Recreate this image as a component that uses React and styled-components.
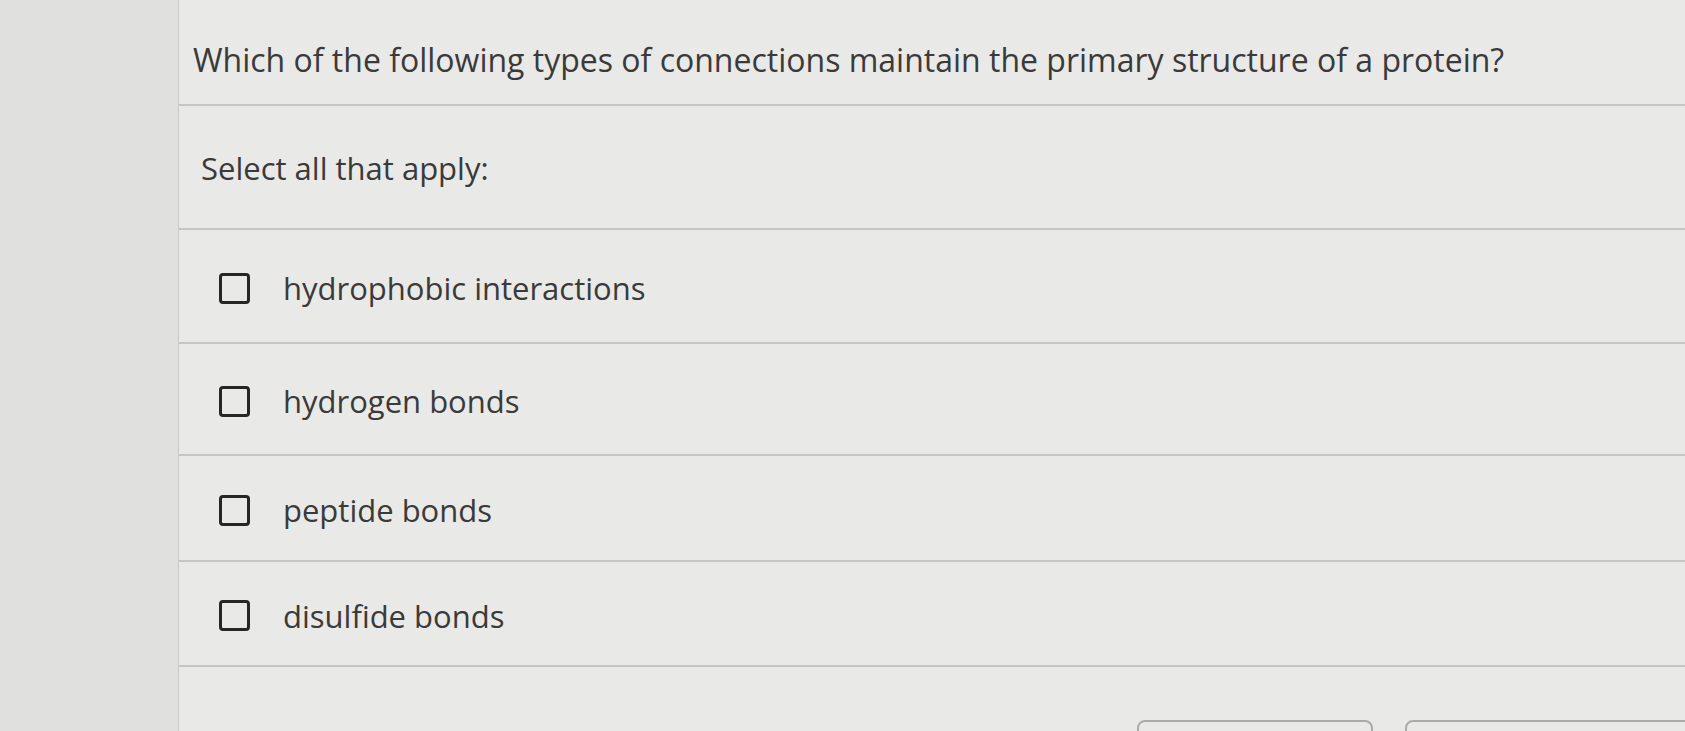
import React, { useState } from 'react'
import styled, { createGlobalStyle } from 'styled-components'

const GlobalStyle = createGlobalStyle`
  html, body {
    margin: 0;
    padding: 0;
    height: 731px;
    overflow: hidden;
    background: #e0e0de;
    font-family: 'Open Sans', 'Noto Sans', sans-serif;
    color: #3a3a3a;
  }
`

const Page = styled.div`
  display: flex;
  height: 731px;
`

const Sidebar = styled.aside`
  width: 178px;
  flex-shrink: 0;
  background: #e0e0de;
  border-right: 1px solid #cacac8;
`

const Panel = styled.main`
  flex: 1;
  background: #e9e9e7;
  overflow: hidden;
`

const Question = styled.h1`
  margin: 0;
  height: 106px;
  box-sizing: border-box;
  padding: 40px 0 0 14px;
  font-size: 32px;
  font-weight: 400;
  line-height: 40px;
  white-space: nowrap;
  border-bottom: 2px solid #c5c5c3;
`

const Prompt = styled.div`
  height: 124px;
  box-sizing: border-box;
  padding: 42px 0 0 22px;
  font-size: 31px;
  line-height: 40px;
  border-bottom: 2px solid #c5c5c3;
`

const Option = styled.label`
  display: flex;
  align-items: center;
  gap: 33px;
  height: ${p => p.$h}px;
  box-sizing: border-box;
  padding: 4px 0 0 40px;
  font-size: 31px;
  border-bottom: 2px solid #c5c5c3;
  cursor: pointer;
`

const Box = styled.span`
  width: 31px;
  height: 31px;
  box-sizing: border-box;
  border: 3px solid #262626;
  border-radius: 4px;
  flex-shrink: 0;
  background: ${p => (p.$on ? '#262626' : 'transparent')};
`

const Footer = styled.div`
  display: flex;
  justify-content: flex-end;
  gap: 32px;
  padding-top: 53px;
`

const Button = styled.button`
  width: 236px;
  height: 44px;
  border: 2px solid #ababa9;
  border-radius: 8px;
  background: transparent;
  &:last-child {
    width: 300px;
    margin-right: -20px;
  }
`

const options = [
  { text: 'hydrophobic interactions', h: 114 },
  { text: 'hydrogen bonds', h: 112 },
  { text: 'peptide bonds', h: 106 },
  { text: 'disulfide bonds', h: 105 },
]

const App = () => {
  const [checked, setChecked] = useState({})
  return (
    <>
      <GlobalStyle />
      <Page>
        <Sidebar />
        <Panel>
          <Question>
            Which of the following types of connections maintain the primary structure of a protein?
          </Question>
          <Prompt>Select all that apply:</Prompt>
          {options.map(o => (
            <Option
              key={o.text}
              $h={o.h}
              onClick={() => setChecked({ ...checked, [o.text]: !checked[o.text] })}
            >
              <Box $on={checked[o.text]} />
              {o.text}
            </Option>
          ))}
          <Footer>
            <Button />
            <Button />
          </Footer>
        </Panel>
      </Page>
    </>
  )
}

export default App
